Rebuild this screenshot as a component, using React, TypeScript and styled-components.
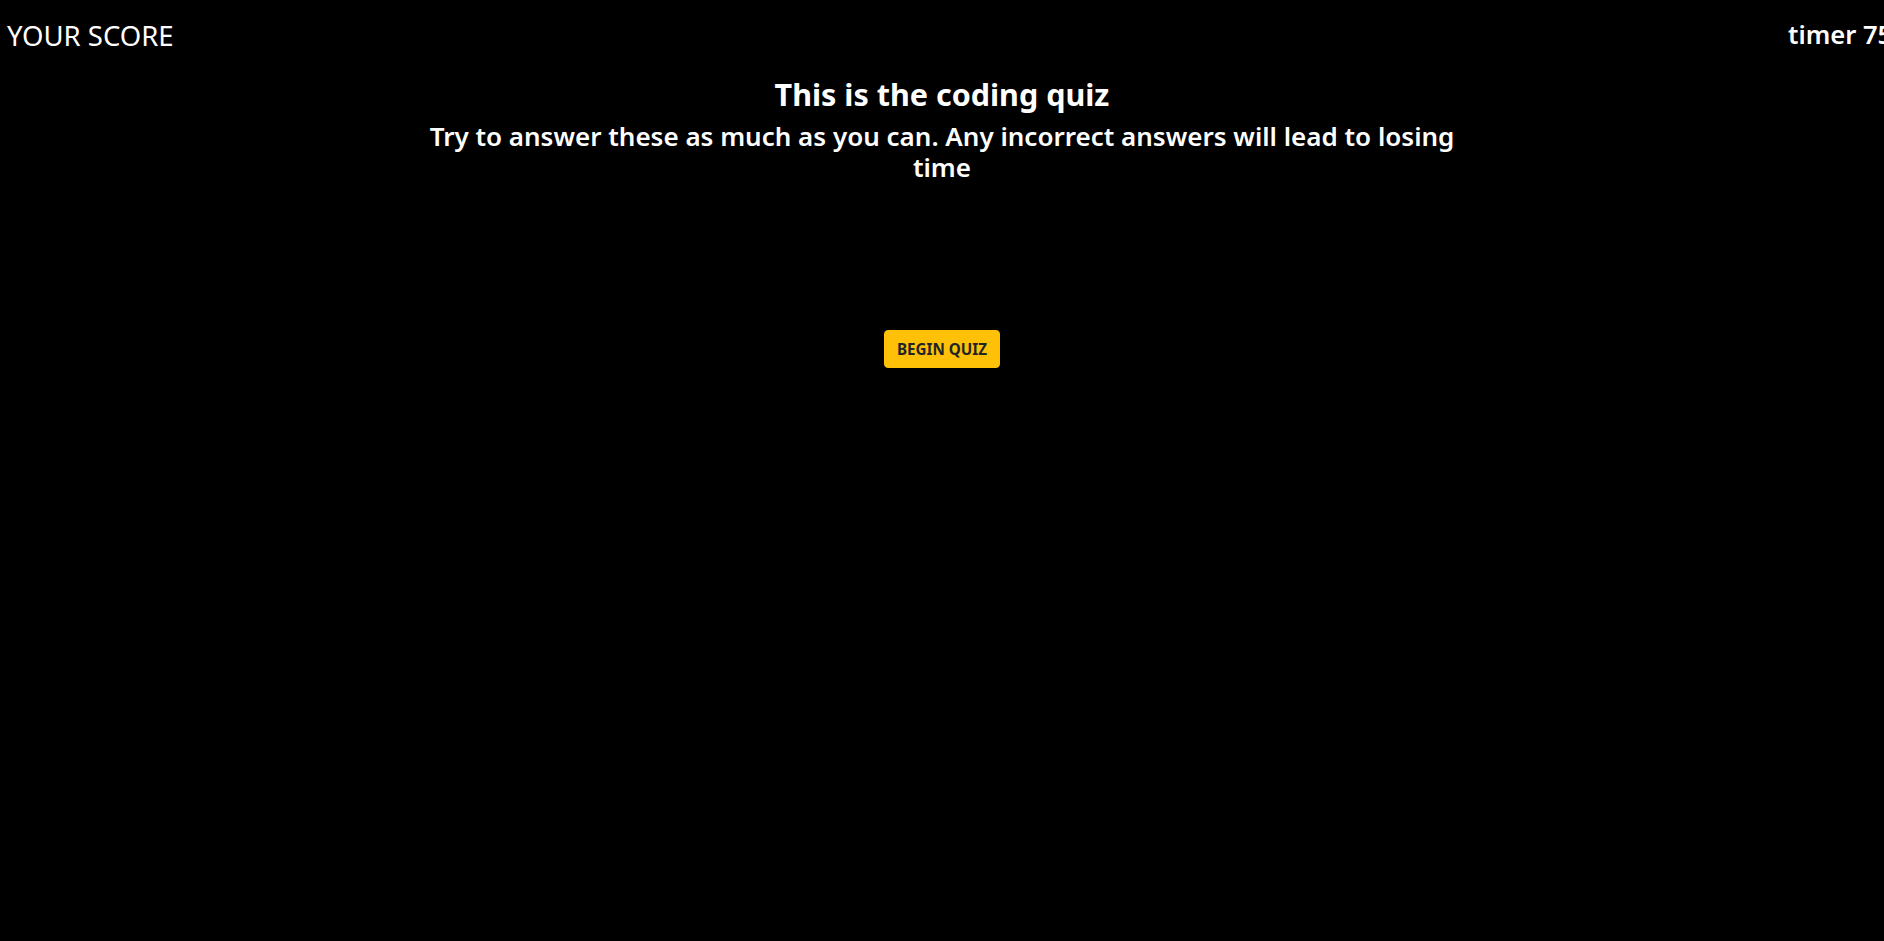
import React from "react";
import styled, { createGlobalStyle } from "styled-components";

const Global = createGlobalStyle`
  html, body {
    margin: 0;
    padding: 0;
    background: #000;
    color: #fff;
    overflow: hidden;
    font-family: "Noto Sans", "Open Sans", sans-serif;
  }
  #root {
    min-height: 100vh;
    background: #000;
  }
`;

const Page = styled.div`
  display: flex;
  flex-direction: column;
  width: 100%;
  min-height: 100vh;
  background: #000;
`;

const Header = styled.header`
  display: flex;
  justify-content: space-between;
  align-items: center;
  height: 32px;
  padding: 19px 0 0 7px;
`;

const HeaderText = styled.div<{ $bold?: boolean; $size: number; $width?: number }>`
  font-size: ${(p) => p.$size}px;
  line-height: 1.2;
  font-weight: ${(p) => (p.$bold ? 600 : 400)};
  white-space: nowrap;
  ${(p) => (p.$width ? `width: ${p.$width}px;` : "")}
`;

const Intro = styled.section`
  display: flex;
  flex-direction: column;
  align-items: center;
  text-align: center;
  margin-top: 25px;
`;

const Title = styled.h2`
  margin: 0 0 8px;
  font-size: 30.5px;
  line-height: 1.2;
  font-weight: 700;
`;

const Subtitle = styled.h3`
  margin: 0;
  max-width: 1060px;
  font-size: 26px;
  line-height: 1.2;
  font-weight: 600;
`;

const Actions = styled.div`
  display: flex;
  justify-content: center;
  margin-top: 147px;
`;

const StartButton = styled.button`
  font-family: inherit;
  font-size: 15.2px;
  line-height: 24px;
  font-weight: 700;
  text-transform: uppercase;
  color: #212529;
  background: #ffc107;
  border: 1px solid #ffc107;
  border-radius: 4px;
  padding: 6px 12px;
  cursor: pointer;
`;

export default function App() {
  return (
    <Page>
      <Global />
      <Header>
        <HeaderText $size={27.5}>YOUR SCORE</HeaderText>
        <HeaderText $bold $size={25.6} $width={96}>timer 75</HeaderText>
      </Header>
      <Intro>
        <Title>This is the coding quiz</Title>
        <Subtitle>
          Try to answer these as much as you can. Any incorrect answers will lead to losing time
        </Subtitle>
      </Intro>
      <Actions>
        <StartButton>Begin Quiz</StartButton>
      </Actions>
    </Page>
  );
}
